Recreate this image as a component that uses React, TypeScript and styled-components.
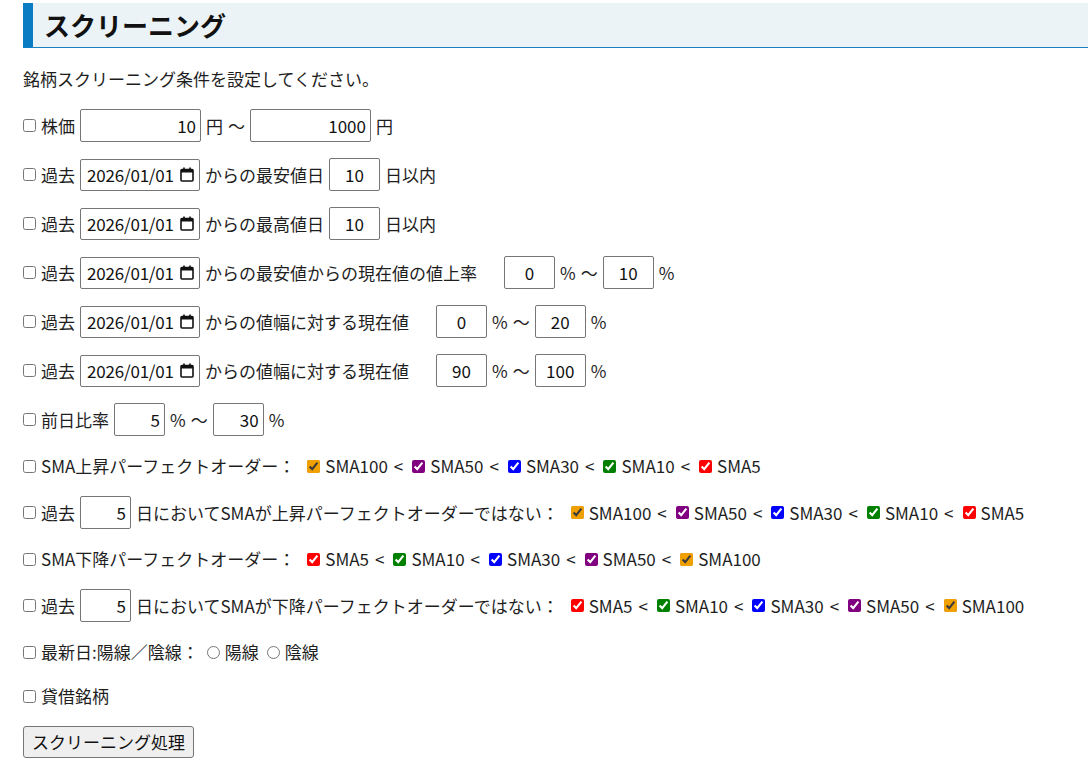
import React from "react";
import styled, { createGlobalStyle } from "styled-components";

const GlobalStyle = createGlobalStyle`
  html, body {
    margin: 0;
    padding: 0;
    background: #fff;
  }
  body {
    font-family: "Noto Sans CJK JP", "Noto Sans", sans-serif;
    font-size: 17px;
    color: #1e1e1e;
  }
`;

type SmaKey = "SMA100" | "SMA50" | "SMA30" | "SMA10" | "SMA5";

const smaColors: Record<SmaKey, string> = {
  SMA100: "#f0a000",
  SMA50: "#800080",
  SMA30: "#0000ff",
  SMA10: "#008000",
  SMA5: "#ff0000",
};

const upOrder: SmaKey[] = ["SMA100", "SMA50", "SMA30", "SMA10", "SMA5"];
const downOrder: SmaKey[] = ["SMA5", "SMA10", "SMA30", "SMA50", "SMA100"];

const CalendarIcon = () => (
  <svg width="14" height="15" viewBox="0 0 14 15" fill="none">
    <rect x="1" y="2.5" width="12" height="11.5" rx="1" stroke="#111" strokeWidth="1.6" />
    <rect x="1" y="2.5" width="12" height="3" fill="#111" />
    <rect x="3.2" y="0.5" width="1.6" height="3" fill="#111" />
    <rect x="9.2" y="0.5" width="1.6" height="3" fill="#111" />
  </svg>
);

const SmaChain = ({ order }: { order: SmaKey[] }) => (
  <SmaGroup>
    {order.map((key, i) => (
      <SmaItem key={key}>
        <ColorCheck type="checkbox" defaultChecked $color={smaColors[key]} />
        <span>{key}</span>
        {i < order.length - 1 && <Lt>&lt;</Lt>}
      </SmaItem>
    ))}
  </SmaGroup>
);

const DateField = ({ value }: { value: string }) => (
  <DateBox>
    <DateText>{value}</DateText>
    <CalendarIcon />
  </DateBox>
);

export default function App() {
  return (
    <>
      <GlobalStyle />
      <Page>
        <Heading>スクリーニング</Heading>
        <Form>
          <Row>銘柄スクリーニング条件を設定してください。</Row>

          <Row>
            <Check type="checkbox" />
            <Text>株価</Text>
            <NumInput type="number" defaultValue={10} $width={121} />
            <Text>円</Text>
            <Text>〜</Text>
            <NumInput type="number" defaultValue={1000} $width={121} />
            <Text>円</Text>
          </Row>

          <Row>
            <Check type="checkbox" />
            <Text>過去</Text>
            <DateField value="2026/01/01" />
            <Text>からの最安値日</Text>
            <NumInput type="number" defaultValue={10} $width={51} $align="center" />
            <Text>日以内</Text>
          </Row>

          <Row>
            <Check type="checkbox" />
            <Text>過去</Text>
            <DateField value="2026/01/01" />
            <Text>からの最高値日</Text>
            <NumInput type="number" defaultValue={10} $width={51} $align="center" />
            <Text>日以内</Text>
          </Row>

          <Row>
            <Check type="checkbox" />
            <Text>過去</Text>
            <DateField value="2026/01/01" />
            <Text $trail={22}>からの最安値からの現在値の値上率</Text>
            <NumInput type="number" defaultValue={0} $width={51} $align="center" />
            <Text>%</Text>
            <Text>〜</Text>
            <NumInput type="number" defaultValue={10} $width={51} $align="center" />
            <Text>%</Text>
          </Row>

          <Row>
            <Check type="checkbox" />
            <Text>過去</Text>
            <DateField value="2026/01/01" />
            <Text $trail={22}>からの値幅に対する現在値</Text>
            <NumInput type="number" defaultValue={0} $width={51} $align="center" />
            <Text>%</Text>
            <Text>〜</Text>
            <NumInput type="number" defaultValue={20} $width={51} $align="center" />
            <Text>%</Text>
          </Row>

          <Row>
            <Check type="checkbox" />
            <Text>過去</Text>
            <DateField value="2026/01/01" />
            <Text $trail={22}>からの値幅に対する現在値</Text>
            <NumInput type="number" defaultValue={90} $width={51} $align="center" />
            <Text>%</Text>
            <Text>〜</Text>
            <NumInput type="number" defaultValue={100} $width={51} $align="center" />
            <Text>%</Text>
          </Row>

          <Row>
            <Check type="checkbox" />
            <Text>前日比率</Text>
            <NumInput type="number" defaultValue={5} $width={51} />
            <Text>%</Text>
            <Text>〜</Text>
            <NumInput type="number" defaultValue={30} $width={51} />
            <Text>%</Text>
          </Row>

          <Row>
            <Check type="checkbox" />
            <Text>SMA上昇パーフェクトオーダー：</Text>
            <SmaChain order={upOrder} />
          </Row>

          <Row>
            <Check type="checkbox" />
            <Text>過去</Text>
            <NumInput type="number" defaultValue={5} $width={51} />
            <Text>日においてSMAが上昇パーフェクトオーダーではない：</Text>
            <SmaChain order={upOrder} />
          </Row>

          <Row>
            <Check type="checkbox" />
            <Text>SMA下降パーフェクトオーダー：</Text>
            <SmaChain order={downOrder} />
          </Row>

          <Row>
            <Check type="checkbox" />
            <Text>過去</Text>
            <NumInput type="number" defaultValue={5} $width={51} />
            <Text>日においてSMAが下降パーフェクトオーダーではない：</Text>
            <SmaChain order={downOrder} />
          </Row>

          <Row>
            <Check type="checkbox" />
            <Text>最新日:陽線／陰線：</Text>
            <RadioLabel>
              <Radio type="radio" name="candle" />
              <span>陽線</span>
            </RadioLabel>
            <RadioLabel>
              <Radio type="radio" name="candle" />
              <span>陰線</span>
            </RadioLabel>
          </Row>

          <Row>
            <Check type="checkbox" />
            <Text>貸借銘柄</Text>
          </Row>

          <Row>
            <SubmitButton type="button">スクリーニング処理</SubmitButton>
          </Row>
        </Form>
      </Page>
    </>
  );
}

const Page = styled.div`
  padding: 3px 0 0 23px;
`;

const Heading = styled.h2`
  margin: 0;
  padding: 4px 0 4px 11px;
  font-size: 26px;
  font-weight: 700;
  line-height: 36px;
  color: #111;
  background: #ebf3f6;
  border-left: 10px solid #0a7cc4;
  border-bottom: 1px solid #1a80c4;
`;

const Form = styled.div`
  display: flex;
  flex-direction: column;
  gap: 16px;
  padding-top: 17px;
`;

const Row = styled.div`
  display: flex;
  align-items: center;
  gap: 5px;
  min-height: 28px;
  white-space: nowrap;
  line-height: 28px;
`;

const Text = styled.span<{ $trail?: number }>`
  margin-right: ${(p) => p.$trail ?? 0}px;
`;

const Check = styled.input`
  width: 13px;
  height: 13px;
  margin: 0;
  flex: none;
`;

const ColorCheck = styled.input<{ $color: string }>`
  width: 13px;
  height: 13px;
  margin: 0 0 0 4px;
  flex: none;
  accent-color: ${(p) => p.$color};
`;

const NumInput = styled.input<{ $width: number; $align?: "right" | "center" }>`
  box-sizing: border-box;
  width: ${(p) => p.$width}px;
  height: 33px;
  padding: 0 4px;
  border: 1px solid #767676;
  border-radius: 2px;
  font: inherit;
  color: #111;
  text-align: ${(p) => p.$align ?? "right"};
  appearance: textfield;
  -moz-appearance: textfield;
  &::-webkit-inner-spin-button,
  &::-webkit-outer-spin-button {
    -webkit-appearance: none;
    margin: 0;
  }
`;

const DateBox = styled.div`
  box-sizing: border-box;
  width: 120px;
  height: 32px;
  padding: 0 5px 0 6px;
  display: flex;
  align-items: center;
  justify-content: space-between;
  border: 1px solid #767676;
  border-radius: 2px;
  color: #111;
`;

const DateText = styled.span`
  letter-spacing: -0.2px;
`;

const SmaGroup = styled.span`
  display: flex;
  align-items: center;
  gap: 5px;
  margin-left: 3px;
`;

const SmaItem = styled.span`
  display: flex;
  align-items: center;
  gap: 5px;
`;

const Lt = styled.span`
  margin-left: 1px;
`;

const RadioLabel = styled.label`
  display: flex;
  align-items: center;
  gap: 5px;
`;

const Radio = styled.input`
  width: 13px;
  height: 13px;
  margin: 0 0 0 3px;
`;

const SubmitButton = styled.button`
  font: inherit;
  color: #111;
  height: 32px;
  padding: 0 8px;
  background: #efefef;
  border: 1px solid #767676;
  border-radius: 3px;
`;
